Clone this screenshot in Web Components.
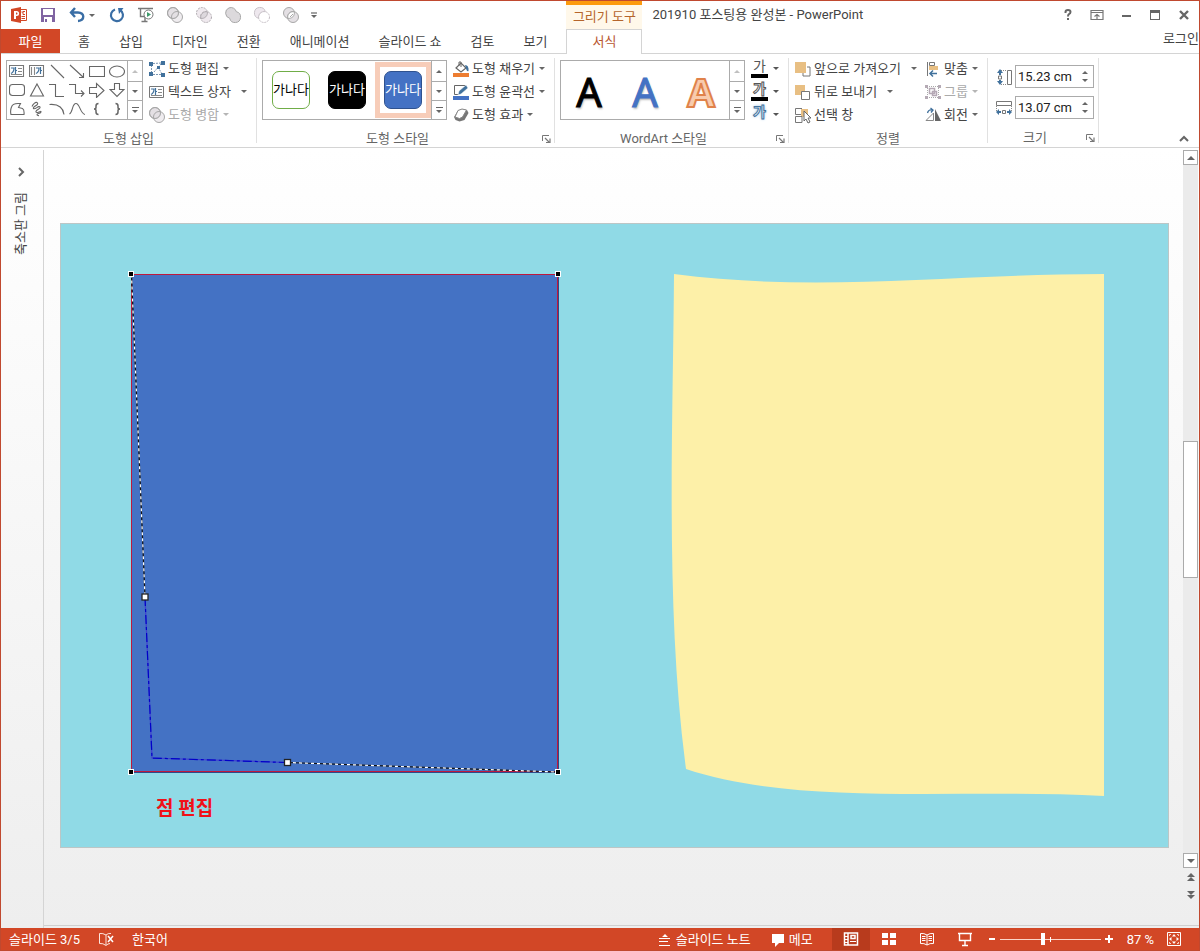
<!DOCTYPE html>
<html lang="ko">
<head>
<meta charset="utf-8">
<title>201910 포스팅용 완성본 - PowerPoint</title>
<style>
	html, body {
		height: 100%;
		margin: 0;
	}
	body {
		font: 13px/16px Roboto, "Noto Sans CJK KR", sans-serif;
		color: #444;
		overflow: hidden;
	}
</style>
</head>
<body>
<ppt-window></ppt-window>

<script>
const BLUE = "#41719c";

const ICONS = {
	// quick access
	powerpoint: `<path d="M0 2 10 0v16L0 14z" fill="#d24726"/><path d="M3 4h2.600a2.300 2.300 0 0 1 0 5H5v3H3zM5 5.500v2h.5a1 1 0 0 0 0-2z" fill="#fff" fill-rule="evenodd"/><path d="M10 2.500h5.500v11H10M10.500 5h1.500v2.500h2M12 4.500h2M10.500 9.500H14M10.500 11.500H14" fill="none" stroke="#d24726"/>`,
	save: `<path d="M1 1h14v14H1z" fill="#8064a2"/><path d="M3 2h10v6H3zM4 10h8v5H4z" fill="#fff"/><path d="M5 12h2v3H5z" fill="#8064a2"/>`,
	undo: `<path d="M6 1 2 5.500 6 10M2 5.500h7c7 0 7 8 0 8.500" fill="none" stroke="#3a6ea5" stroke-width="2.400"/>`,
	redo: `<path d="M6 2.500A6 6 0 1 0 11 3" fill="none" stroke="#3a6ea5" stroke-width="2.200"/><path d="M9 1h5.500L10 7z" fill="#3a6ea5"/>`,
	present: `<path d="M0 1.500h15M2.500 2v7.500H7M7 10v4M3.500 14.500h6" fill="none" stroke="#777" stroke-width="1.400"/><circle cx="10.500" cy="7.500" r="4.500" fill="#fff" stroke="#777"/><path d="M9 5v5l4-2.500z" fill="#3f9b6c"/>`,
	combine: `<g fill="#e4e0e4" stroke="#a8a8a8"><circle cx="6" cy="6" r="5.500"/><circle cx="10" cy="10" r="5.500" fill-opacity=".6"/><circle cx="6" cy="6" r="5.500" fill="none"/></g>`,
	fragment: `<g fill="#efe9ee" stroke="#b0abb0" stroke-dasharray="2 1"><circle cx="6" cy="6" r="5.500"/><circle cx="10" cy="10" r="5.500"/><path d="M4.800 11.300a5.500 5.500 0 0 1 6.500-6.500 5.500 5.500 0 0 1-6.500 6.500z" fill="#ddd8dd" stroke-dasharray="none"/></g>`,
	union: `<path d="M4 .9a5.500 5.500 0 0 1 7.300 3.800 5.500 5.500 0 1 1-6.600 6.600A5.500 5.500 0 0 1 4 .9z" fill="#dcd9dc" stroke="#a8a8a8"/>`,
	subtract: `<circle cx="10" cy="10" r="5.500" fill="#fff" stroke="#c3bcc3" stroke-dasharray="2 1"/><path d="M11.300 4.700a5.500 5.500 0 1 0-6.600 6.600 5.500 5.500 0 0 1 6.600-6.600z" fill="#eee8ee" stroke="#c9c3c9"/>`,
	intersect: `<g fill="#e4e0e4" stroke="#a8a8a8"><circle cx="6" cy="6" r="5.500"/><circle cx="10" cy="10" r="5.500"/><path d="M4.800 11.300a5.500 5.500 0 0 1 6.500-6.500 5.500 5.500 0 0 1-6.500 6.500z" fill="#fff"/><path d="m7 10 3-3"/></g>`,
	customize: `<path d="M5 6h6" stroke="#666" stroke-width="1.200"/><path d="M5 8h6l-3 3z" fill="#666"/>`,

	// window controls
	help: `<path d="M5.500 6V5q0-2 2.500-2t2.500 2q0 1.500-1.500 2.200-1 .6-1 2.300" fill="none" stroke="#666" stroke-width="2"/><path d="M7 11h2v2H7z" fill="#666"/>`,
	ribbonOptions: `<path d="M2 3.500h12v9H2zM2 5.500h12M8 12V8M5.500 9.500 8 7.500l2.500 2" fill="none" stroke="#777" stroke-width="1.200"/>`,
	minimize: `<path d="M4 8h9v2H4z" fill="#666"/>`,
	maximize: `<path d="M3 3h10v10H3zM4 6v6h8V6z" fill="#666" fill-rule="evenodd"/>`,
	close: `<path d="m4 4 8 8M12 4l-8 8" stroke="#666" stroke-width="2.400"/>`,
	chevronUp: `<path d="m4 10 4-4 4 4" fill="none" stroke="#666" stroke-width="2"/>`,
	chevronRight: `<path d="m6 4 4 4-4 4" fill="none" stroke="#666" stroke-width="2"/>`,

	// shape gallery
	textBox: `<path d="M.5 2.500h14v11H.5z" fill="#fff" stroke="#777"/><path d="M2 5h3q0 4-3 5.500M6.500 4v7M6.500 7.500H8" fill="none" stroke="${BLUE}" stroke-width="1.200"/><path d="M9 5.500h4M9 8.500h4M2 11.500h11" stroke="#888"/>`,
	verticalText: `<path d="M.5 2.500h14v11H.5z" fill="#fff" stroke="#777"/><path d="M7 5h3q0 4-3 5.500M11.500 4v7M11.500 7.500H13" fill="none" stroke="${BLUE}" stroke-width="1.200"/><path d="M2.500 4v8M5.500 4v8" stroke="#888"/>`,
	line: `<path d="m2 2 13 13"/>`,
	arrow: `<path d="m1 2 13 12M14.500 10v4.500H10"/>`,
	rect: `<path d="M.5 3.500h15v10H.5z"/>`,
	ellipse: `<ellipse cx="8" cy="8.500" rx="7.500" ry="5.500"/>`,
	roundRect: `<rect x=".5" y="2.500" width="15" height="11" rx="3"/>`,
	triangle: `<path d="M8 2 14.500 14h-13z"/>`,
	elbow: `<path d="M0 2.500h6.500v12H15"/>`,
	elbowArrow: `<path d="M0 2.500h6.500v9H15M12 8.500l3 3-3 3"/>`,
	rightArrow: `<path d="M.5 5.500h7v-4l7.500 7-7.500 7v-4h-7z"/>`,
	downArrow: `<path d="M5.500 1.500h5v6h4.500l-7 7-7-7h4.500z"/>`,
	freeform: `<path d="M2.500 6q1-4 8-3.500h1l-2 4 4 1q2 1 1.500 6h-13q-1-4 .5-7.500z"/>`,
	scribble: `<path d="M3 5.500C4 3 7 0 8.500 2S3 6 4.500 7.500 10 4 11 6s-5 3-4 5 5-2 5 0-4 1-4 2.500 2 1 2 1"/>`,
	arc: `<path d="M.5 3.500q13-1 14.500 10"/>`,
	curve: `<path d="M.5 13C4 11 3 2.500 7 2.500s4 10 9 11"/>`,
	leftBrace: `<path d="M9.500 2.500Q7 2.500 7 5v1.500Q7 8 5 8q2 0 2 1.500V11q0 2.500 2.500 2.500" stroke-width="1.500"/>`,
	rightBrace: `<path d="M6.500 2.500Q9 2.500 9 5v1.500Q9 8 11 8 9 8 9 9.500V11q0 2.500-2.500 2.500" stroke-width="1.500"/>`,

	// ribbon commands
	editShape: `<path d="M2.500 4v9M4 2.500l9-.5M4 13.500h9M5 11l7-8M9 6l4 7" fill="none" stroke="#7b96b2" stroke-dasharray="2 1"/><path d="M0 1h4v4H0zM12 0h4v4h-4zM0 11h4v4H0zM12 12h4v4h-4zM8 5h3v3H8z" fill="${BLUE}"/>`,
	fill: `<path d="m3 7 5-5 5 5-5 4z" fill="#fff" stroke="#666" stroke-width="1.200"/><path d="M6 5V1h2v5" fill="none" stroke="#666"/><path d="M12 4q4 0 3.500 6-1 1-2-1z" fill="${BLUE}"/><path d="M0 12h16v4H0z" fill="#ed7d31"/>`,
	outline: `<path d="M1.500 10.500v-9h11" fill="none" stroke="#666"/><path d="M1.500 10.500h4" stroke="#666"/><path d="m5 11 1-4 7-6 2 3-7 6z" fill="${BLUE}" stroke="#fff" stroke-width=".5"/><path d="M0 12h16v4H0z" fill="#4472c4"/>`,
	effects: `<path d="M5 3.500 9 2l5 1 1.500 3-4 7-5 1.500-4-1.500-1.500-3z" fill="#777"/><path d="M5 3.500 9 2l4.500 1-4 7-3 1.500L2 10z" fill="#fff" stroke="#888"/>`,
	front: `<path d="M8 15h7V6h-3M8 15v-3" fill="none" stroke="#777"/><path d="M0 1h11v11H0z" fill="#e8bf83"/>`,
	back: `<path d="M0 1h10v10H0z" fill="#e8bf83"/><path d="M6.500 7.500h8v8h-8z" fill="#fff" stroke="#777"/>`,
	selectPane: `<path d="M6 2h7v8H6z" fill="#e8bf83"/><path d="M7 1.500H.5v6H6M7 9.500H.5v6H7v-6" fill="none" stroke="#777"/><path d="M9 4v10l2-2 2 4 2-1-2-4h3z" fill="#fff" stroke="#666"/>`,
	align: `<path d="M2.500 1v14" stroke="#777"/><path d="M4.500 1.500h5v3h-5z" fill="none" stroke="#777"/><path d="M4 5h9v4H4z" fill="#e8bf83"/><path d="M12 12.500H5M8 9.500l-3 3 3 3" fill="none" stroke="${BLUE}" stroke-width="1.500"/>`,
	group: `<path d="M2 2.500h12M2 13.500h12M2.500 2v12M13.500 2v12" stroke="#aaa" stroke-dasharray="1 1"/><path d="M4.500 4.500h5v5h-5zM7.500 7.500h4v4h-4z" fill="none" stroke="#b5a8b5" stroke-width="1.500"/><path d="M0 1h3v3H0zM13 1h3v3h-3zM0 12h3v3H0zM13 12h3v3h-3z" fill="#b5aab5"/>`,
	rotate: `<path d="M10 2l6 12h-6z" fill="#666"/><path d="M8.500 6v7.500H1z" fill="#fff" stroke="#888"/><path d="M2.500 6q1-4 5-3M5.500 1l2.500 2-2 2.500" fill="none" stroke="${BLUE}" stroke-width="1.300"/>`,
	height: `<path d="M11.500 1.500h4v14h-4z" fill="none" stroke="#777"/><path d="M5 1.500h6M5 15.500h6" stroke="#888" stroke-dasharray="1 1"/><path d="M2.500 7h3v3h-3z" fill="none" stroke="#777"/><path d="M4 0 7 4H5v2H3V4H1zM4 16l3-4H5v-1H3v1H1z" fill="${BLUE}"/>`,
	width: `<path d="M.5 1.500h15v4H.5z" fill="none" stroke="#777"/><path d="M.5 6v6M15.500 6v6" stroke="#888" stroke-dasharray="1 1"/><path d="M6.500 10.500h3v3h-3z" fill="none" stroke="#777"/><path d="m0 12 3-3v2h2v2H3v2zM16 12l-3-3v2h-2v2h2v2z" fill="${BLUE}"/>`,
	launcher: `<path d="M4.500 10V4.500H11" fill="none" stroke="#777"/><path d="m7 7 4 4M12 7.500v4H8" fill="none" stroke="#777" stroke-width="1.200"/>`,

	// status bar
	proofing: `<path d="M8 4Q5 2 1.500 2.500v10Q5 12 8 14.500q2-2 4-2M8 4v10M8 4q2-2 5-1.500" fill="none" stroke="#fce4dc"/><path d="m10 5 5 6M15 5l-5 6" stroke="#fff" stroke-width="1.500"/>`,
	notes: `<path d="m5 5 3-3 3 3zM2 6h11v1H2zM2 9h9v1H2zM2 13h11v1H2z" fill="#fff"/>`,
	comment: `<path d="M2 2h12v9h-5l-4 4v-4H2z" fill="#fff"/>`,
	normalView: `<path d="M1.500 2v12h13V2zM5 2v12" fill="none" stroke="#fff" stroke-width="1.500"/><path d="M2 5.500h3M2 8.500h3M2 11.500h3M7 10.500h6" stroke="#fff"/><path d="M8 4.500h4v3H8z" fill="none" stroke="#fff" stroke-width="1.500"/>`,
	sorter: `<path d="M1 2h6v5H1zM9 2h6v5H9zM1 9h6v5H1zM9 9h6v5H9z" fill="#fff"/>`,
	reading: `<path d="M8 4Q5 2 1.500 2.500v10Q5 12 8 14q3-2 6.500-1.500v-10Q11 2 8 4v10M3 5.500h3.500M3 7.500h3.500M3 9.500h3.500M9.500 5.500H13M9.500 7.500H13M9.500 9.500H13" fill="none" stroke="#fff"/>`,
	slideShow: `<path d="M1 2.500h14M2.500 3v6.500h11V3M8 10v4M5 14.500h6" fill="none" stroke="#fff" stroke-width="1.400"/>`,
	minus: `<path d="M5 7h6v2H5z" fill="#fff"/>`,
	plus: `<path d="M4 7h8v2H4zM7 4h2v8H7z" fill="#fff"/>`,
	fit: `<path d="M1.500 1.500h13v13h-13z" fill="none" stroke="#fff"/><path d="M6 5.500h4L8 3zM6 10.500h4L8 13zM5.500 6v4L3 8zM10.500 6v4L13 8z" fill="#fff"/><path d="M3.500 5V3.500H5M11 3.500h1.500V5M3.500 11v1.500H5M11 12.500h1.500V11" fill="none" stroke="#fbd5c9"/>`,

	// scrolling
	up: `<path d="m4 10 4-4 4 4z" fill="#666"/>`,
	down: `<path d="m4 6 4 4 4-4z" fill="#666"/>`,
	pageUp: `<path d="m4 8 4-4 4 4zM4 12l4-4 4 4z" fill="#666"/>`,
	pageDown: `<path d="m4 4 4 4 4-4zM4 8l4 4 4-4z" fill="#666"/>`
};

const RESET = `
	*, :host { box-sizing: border-box; }
	button, input {
		margin: 0;
		padding: 0;
		border: 0;
		background: none;
		color: inherit;
		font: inherit;
	}
`;

class BaseElement extends HTMLElement {

	constructor() {
		super();
		this.root = this.attachShadow({ mode: "open" });
	}

	connectedCallback() {
		this.root.innerHTML = `<style>${RESET}</style>${this.render()}`;
	}

	attr(name) {
		return this.getAttribute(name) || "";
	}

}

class OfficeIcon extends BaseElement {

	render() {
		return `
			<style>
				:host { display: block; flex: none; width: 16px; height: 16px; }
				svg { display: block; width: 100%; height: 100%; overflow: visible; }
			</style>
			<svg viewBox="0 0 16 16" fill="none" stroke="none" aria-hidden="true">${ICONS[this.attr("name")]}</svg>
		`;
	}

}

class IconButton extends BaseElement {

	render() {
		return `
			<style>
				:host { display: flex; flex: none; }
				button { display: flex; align-items: center; justify-content: center; width: 100%; height: 100%; }
			</style>
			<button type="button" aria-label="${this.attr("label")}"><office-icon name="${this.attr("icon")}"></office-icon></button>
		`;
	}

}

class DropCaret extends BaseElement {

	render() {
		return `
			<style>
				:host {
					display: block;
					flex: none;
					border: 3px solid transparent;
					border-top-color: currentColor;
					border-bottom: 0;
				}
			</style>
		`;
	}

}

class QuickAccess extends BaseElement {

	render() {
		const merge = ["combine", "fragment", "union", "subtract", "intersect"];
		return `
			<style>
				:host { display: flex; align-items: center; gap: 13px; padding-left: 10px; color: #666; }
				.undo { display: flex; align-items: center; gap: 4px; margin-right: 1px; }
				.customize { margin-left: -6px; }
			</style>
			<office-icon name="powerpoint"></office-icon>
			<icon-button icon="save" label="저장"></icon-button>
			<div class="undo"><icon-button icon="undo" label="실행 취소"></icon-button><drop-caret></drop-caret></div>
			<icon-button icon="redo" label="다시 실행"></icon-button>
			<icon-button icon="present" label="처음부터 시작"></icon-button>
			${merge.map(name => `<icon-button icon="${name}" label="도형 병합"></icon-button>`).join("")}
			<icon-button class="customize" icon="customize" label="빠른 실행 도구 모음 사용자 지정"></icon-button>
		`;
	}

}

class TabStrip extends BaseElement {

	render() {
		const tabs = ["홈", "삽입", "디자인", "전환", "애니메이션", "슬라이드 쇼", "검토", "보기"];
		return `
			<style>
				:host { display: flex; border-bottom: 1px solid #d4d4d4; }
				button { padding-top: 2px; }
				.file { width: 59px; background: #d24726; color: #fff; }
				.tabs { display: flex; gap: 29px; padding: 0 19px 0 18px; }
				.tabs button { white-space: nowrap; }
			</style>
			<button class="file" type="button">파일</button>
			<div class="tabs">${tabs.map(tab => `<button type="button">${tab}</button>`).join("")}</div>
		`;
	}

}

class WindowControls extends BaseElement {

	render() {
		return `
			<style>
				:host { display: flex; align-items: center; gap: 13px; padding-right: 7px; }
			</style>
			<icon-button icon="help" label="도움말"></icon-button>
			<icon-button icon="ribbonOptions" label="리본 메뉴 표시 옵션"></icon-button>
			<icon-button icon="minimize" label="최소화"></icon-button>
			<icon-button icon="maximize" label="최대화"></icon-button>
			<icon-button icon="close" label="닫기"></icon-button>
		`;
	}

}

class WindowHeader extends BaseElement {

	render() {
		return `
			<style>
				:host {
					display: grid;
					grid-template: 28px 25px / auto 76px 1fr;
					background: #fff;
				}
				.context {
					border-top: 4px solid #fc9a0e;
					background: #fff8ea;
					color: #b5652b;
					text-align: center;
					line-height: 24px;
				}
				.title { display: flex; align-items: center; justify-content: space-between; padding-left: 10px; }
				.format { border: 1px solid #d4d4d4; border-bottom: 0; color: #b8562e; }
				.account { display: flex; justify-content: flex-end; border-bottom: 1px solid #d4d4d4; }
				.account button { height: 20px; }
			</style>
			<quick-access></quick-access>
			<div class="context">그리기 도구</div>
			<div class="title"><span>201910 포스팅용 완성본 - PowerPoint</span><window-controls></window-controls></div>
			<tab-strip></tab-strip>
			<button class="format" type="button">서식</button>
			<div class="account"><button type="button">로그인</button></div>
		`;
	}

}

class RibbonGroup extends BaseElement {

	render() {
		return `
			<style>
				:host { display: flex; flex-direction: column; padding-top: 3px; position: relative; }
				.content { display: flex; height: 69px; padding: 0 10px 0 5px; }
				.footer { display: flex; align-items: center; height: 18px; padding-right: 1px; margin-top: 4px; color: #666; }
				.footer span { flex: 1; text-align: center; white-space: nowrap; }
				/* separator stops short of the ribbon's lower edge */
				:host::after {
					content: "";
					position: absolute;
					top: 4px;
					right: 0;
					bottom: 4px;
					border-right: 1px solid #e1e1e1;
				}
			</style>
			<div class="content"><slot></slot></div>
			<div class="footer">
				<span>${this.attr("label")}</span>
				${this.hasAttribute("launcher") ? `<icon-button icon="launcher" label="${this.attr("label")} 대화 상자"></icon-button>` : ""}
			</div>
		`;
	}

}

class RibbonColumn extends BaseElement {

	render() {
		return `
			<style>
				:host { display: flex; flex-direction: column; align-items: flex-start; padding-left: 6px; }
			</style>
			<slot></slot>
		`;
	}

}

class RibbonButton extends BaseElement {

	render() {
		const caret = this.attr("caret");
		return `
			<style>
				:host { display: block; height: 23px; }
				button { display: flex; align-items: center; gap: 3px; height: 100%; white-space: nowrap; }
				drop-caret { color: #666; margin-left: ${caret === "split" ? 7 : 1}px; }
				button:disabled { color: #aaa; }
				button:disabled drop-caret { color: #b5b5b5; }
			</style>
			<button type="button" ${this.hasAttribute("disabled") ? "disabled" : ""}>
				<office-icon name="${this.attr("icon")}"></office-icon>
				<slot></slot>
				${caret ? "<drop-caret></drop-caret>" : ""}
			</button>
		`;
	}

}

class RibbonGallery extends BaseElement {

	render() {
		return `
			<style>
				:host { display: flex; height: 60px; margin-top: 3px; border: 1px solid #ababab; background: #fff; }
				.items { display: flex; }
				.scroll { display: grid; grid-template-rows: 20px 19px 19px; width: 15px; border-left: 1px solid #ababab; }
				.scroll button { display: flex; align-items: center; justify-content: center; color: #666; }
				.scroll button + button { border-top: 1px solid #ababab; }
				.scroll button:disabled { color: #c0c0c0; }
				.up { transform: rotate(180deg); }
				.more { flex-direction: column; gap: 2px; }
				.more::before { content: ""; width: 7px; border-top: 1px solid #666; }
			</style>
			<div class="items"><slot></slot></div>
			<div class="scroll">
				<button type="button" aria-label="위로" ${this.hasAttribute("at-top") ? "disabled" : ""}><drop-caret class="up"></drop-caret></button>
				<button type="button" aria-label="아래로"><drop-caret></drop-caret></button>
				<button type="button" aria-label="자세히" class="more"><drop-caret></drop-caret></button>
			</div>
		`;
	}

}

class ShapeGrid extends BaseElement {

	render() {
		const shapes = [
			"textBox", "verticalText", "line", "arrow", "rect", "ellipse",
			"roundRect", "triangle", "elbow", "elbowArrow", "rightArrow", "downArrow",
			"freeform", "scribble", "arc", "curve", "leftBrace", "rightBrace"
		];
		return `
			<style>
				:host { display: grid; grid-template-columns: repeat(6, 20px); grid-auto-rows: 19px; }
				button { display: flex; align-items: center; justify-content: center; }
				svg { width: 16px; height: 16px; fill: none; stroke: #666; stroke-width: 1.1; }
			</style>
			${shapes.map(name => `<button type="button" aria-label="${name}"><svg viewBox="0 0 16 16">${ICONS[name]}</svg></button>`).join("")}
		`;
	}

}

class StyleSwatch extends BaseElement {

	render() {
		return `
			<style>
				:host { display: block; width: 56px; height: 56px; margin-top: 1px; border: 5px solid transparent; }
				:host([selected]) { border-color: #f7cdb9; }
				button {
					display: block;
					width: 38px;
					height: 38px;
					margin: 4px;
					border: 1px solid var(--line);
					border-radius: 7px;
					background: var(--fill);
					color: var(--ink);
					white-space: nowrap;
				}
				span { display: flex; justify-content: center; }
			</style>
			<button type="button"><span>가나다</span></button>
		`;
	}

}

class WordArtSample extends BaseElement {

	render() {
		return `
			<style>
				:host { display: block; width: 56px; height: 58px; }
				button {
					width: 100%;
					height: 100%;
					padding-top: 4px;
					font: 40px/48px "Noto Sans", sans-serif;
					color: var(--ink);
					-webkit-text-stroke: 1px var(--ink);
					text-shadow: 1px 2px 2px #bbb;
				}
				:host([bold]) button {
					font-weight: 700;
					-webkit-text-stroke: 2px #e0824a;
					text-shadow: 0 0 2px #f8cbad;
				}
			</style>
			<button type="button">A</button>
		`;
	}

}

class TextTool extends BaseElement {

	render() {
		return `
			<style>
				:host { display: block; height: 23px; }
				button { display: flex; align-items: center; gap: 5px; height: 100%; color: #555; }
				.glyph { width: 17px; height: 18px; line-height: 13px; text-align: center; font-size: 14px; }
				:host([bar]) .glyph { border-bottom: 4px solid #000; }
				:host([kind="outline"]) .glyph { color: #fff; -webkit-text-stroke: 1px #555; font-weight: 700; }
				:host([kind="glow"]) .glyph { color: #fff; -webkit-text-stroke: 1px ${BLUE}; font-weight: 700; text-shadow: 0 0 3px #5b9bd5; }
			</style>
			<button type="button" aria-label="${this.attr("label")}"><span class="glyph">가</span><drop-caret></drop-caret></button>
		`;
	}

}

class SpinField extends BaseElement {

	render() {
		return `
			<style>
				:host { display: block; }
				label { display: flex; align-items: center; gap: 3px; }
				.box { display: flex; height: 23px; width: 79px; border: 1px solid #ababab; color: #222; }
				input { flex: 1; min-width: 0; padding-left: 2px; outline: 0; }
				.spin { display: flex; flex-direction: column; align-items: center; justify-content: space-evenly; width: 16px; color: #666; }
				.spin button { display: flex; }
				.up { transform: rotate(180deg); }
			</style>
			<label>
				<office-icon name="${this.attr("icon")}"></office-icon>
				<span class="box">
					<input type="text" aria-label="${this.attr("label")}" value="${this.attr("value")}">
					<span class="spin">
						<button type="button" aria-label="늘리기"><drop-caret class="up"></drop-caret></button>
						<button type="button" aria-label="줄이기"><drop-caret></drop-caret></button>
					</span>
				</span>
			</label>
		`;
	}

}

class RibbonBar extends BaseElement {

	render() {
		return `
			<style>
				:host { display: flex; height: 94px; background: #fff; border-bottom: 1px solid #d4d4d4; }
				.order { padding-left: 1px; }
				.arrange { padding-left: 8px; }
				.size { display: flex; flex-direction: column; gap: 8px; padding: 8px 0 0 3px; margin-right: -5px; }
				.collapse { align-self: flex-end; margin-left: auto; margin-right: 7px; }
			</style>
			<ribbon-group label="도형 삽입">
				<ribbon-gallery at-top><shape-grid></shape-grid></ribbon-gallery>
				<ribbon-column>
					<ribbon-button icon="editShape" caret="menu">도형 편집</ribbon-button>
					<ribbon-button icon="textBox" caret="split">텍스트 상자</ribbon-button>
					<ribbon-button icon="combine" caret="menu" disabled>도형 병합</ribbon-button>
				</ribbon-column>
			</ribbon-group>
			<ribbon-group label="도형 스타일" launcher>
				<ribbon-gallery>
					<style-swatch style="--fill:#fff; --line:#70ad47; --ink:#000"></style-swatch>
					<style-swatch style="--fill:#000; --line:#000; --ink:#fff"></style-swatch>
					<style-swatch selected style="--fill:#4472c4; --line:#2f528f; --ink:#fff"></style-swatch>
				</ribbon-gallery>
				<ribbon-column>
					<ribbon-button icon="fill" caret="menu">도형 채우기</ribbon-button>
					<ribbon-button icon="outline" caret="menu">도형 윤곽선</ribbon-button>
					<ribbon-button icon="effects" caret="menu">도형 효과</ribbon-button>
				</ribbon-column>
			</ribbon-group>
			<ribbon-group label="WordArt 스타일" launcher>
				<ribbon-gallery at-top>
					<word-art-sample style="--ink:#000"></word-art-sample>
					<word-art-sample style="--ink:#4472c4"></word-art-sample>
					<word-art-sample bold style="--ink:#f8cbad"></word-art-sample>
				</ribbon-gallery>
				<ribbon-column>
					<text-tool bar label="텍스트 채우기"></text-tool>
					<text-tool bar kind="outline" label="텍스트 윤곽선"></text-tool>
					<text-tool kind="glow" label="텍스트 효과"></text-tool>
				</ribbon-column>
			</ribbon-group>
			<ribbon-group label="정렬">
				<ribbon-column class="order">
					<ribbon-button icon="front" caret="split">앞으로 가져오기</ribbon-button>
					<ribbon-button icon="back" caret="split">뒤로 보내기</ribbon-button>
					<ribbon-button icon="selectPane">선택 창</ribbon-button>
				</ribbon-column>
				<ribbon-column class="arrange">
					<ribbon-button icon="align" caret="menu">맞춤</ribbon-button>
					<ribbon-button icon="group" caret="menu" disabled>그룹</ribbon-button>
					<ribbon-button icon="rotate" caret="menu">회전</ribbon-button>
				</ribbon-column>
			</ribbon-group>
			<ribbon-group label="크기" launcher>
				<div class="size">
					<spin-field icon="height" label="높이" value="15.23 cm"></spin-field>
					<spin-field icon="width" label="너비" value="13.07 cm"></spin-field>
				</div>
			</ribbon-group>
			<icon-button class="collapse" icon="chevronUp" label="리본 메뉴 축소"></icon-button>
		`;
	}

}

class ThumbnailPane extends BaseElement {

	render() {
		return `
			<style>
				:host {
					display: flex;
					flex-direction: column;
					align-items: center;
					gap: 12px;
					width: 43px;
					padding: 14px 3px 0 0;
					border-right: 1px solid #d4d4d4;
				}
				span { writing-mode: vertical-rl; text-orientation: sideways; transform: rotate(180deg); }
			</style>
			<icon-button icon="chevronRight" label="축소판 펼치기"></icon-button>
			<span>축소판 그림</span>
		`;
	}

}

class SlideCanvas extends BaseElement {

	render() {
		const handle = (x, y) => `<rect x="${x - 2.5}" y="${y - 2.5}" width="5" height="5" fill="#000" stroke="#fff"/>`;
		const knob = (x, y) => `<rect x="${x - 3}" y="${y - 3}" width="6" height="6" fill="#fff" stroke="#222" stroke-width="1.300"/>`;
		return `
			<style>
				:host { display: block; }
				svg { display: block; width: 100%; border: 1px solid #bcc6c6; background: #90dae6; }
				text { font-size: 19px; font-weight: 700; fill: #f01018; }
			</style>
			<svg viewBox="61 224 1107 623">
				<path d="M131 274h428v499H131z" fill="#2f4a8c"/>
				<path d="M131 274h427v498H131z" fill="#c0183c"/>
				<path d="M132 275h425v496H132z" fill="#4472c4"/>
				<g fill="none" stroke-width="1.200">
					<path d="M131.500 274.500 145 597M287 762.500 558 772" stroke="#111"/>
					<path d="M131.500 274.500 145 597M287 762.500 558 772" stroke="#fff" stroke-dasharray="3 3"/>
					<path d="M145 597 152 758 287 762.500" stroke="#4040d0"/>
					<path d="M145 597 152 758 287 762.500" stroke="#0000c8" stroke-dasharray="9 3 3 3"/>
				</g>
				${handle(131, 274)}${handle(558, 274)}${handle(131, 772)}${handle(558, 772)}
				${knob(145, 597)}${knob(287.5, 762.5)}
				<path d="M674 274C820 293 950 274 1104 274V796C960 788 800 807 686 769C665 610 673 430 674 274z" fill="#fdf0a8"/>
				<text x="156" y="815">점 편집</text>
			</svg>
		`;
	}

}

class VerticalScroll extends BaseElement {

	render() {
		return `
			<style>
				:host { display: flex; flex-direction: column; width: 16px; padding: 0 1px 21px 0; }
				.end { height: 15px; border: 1px solid #ababab; background: #fff; }
				.track { flex: 1; display: grid; grid-template-rows: 276fr 138fr 275fr; background: #ebebeb; }
				.thumb { grid-row: 2; border: 1px solid #ababab; background: #fff; }
				.page { height: 18px; }
			</style>
			<icon-button class="end" icon="up" label="위로"></icon-button>
			<div class="track"><div class="thumb"></div></div>
			<icon-button class="end" icon="down" label="아래로"></icon-button>
			<icon-button class="page" icon="pageUp" label="이전 슬라이드"></icon-button>
			<icon-button class="page" icon="pageDown" label="다음 슬라이드"></icon-button>
		`;
	}

}

class WorkArea extends BaseElement {

	render() {
		return `
			<style>
				:host {
					display: flex;
					flex: 1;
					min-height: 0;
					padding-top: 2px;
					background: linear-gradient(#fff, #eee);
				}
				main { flex: 1; min-width: 0; display: flex; align-items: center; padding: 0 14px 4px 16px; border-bottom: 1px solid #d0d0d0; }
				slide-canvas { flex: 1; min-width: 0; }
				.edge { display: flex; flex: 1; min-width: 0; margin-bottom: 2px; }
				vertical-scroll { border-bottom: 1px solid #d0d0d0; }
			</style>
			<thumbnail-pane></thumbnail-pane>
			<div class="edge">
				<main><slide-canvas></slide-canvas></main>
				<vertical-scroll></vertical-scroll>
			</div>
		`;
	}

}

class ZoomSlider extends BaseElement {

	render() {
		return `
			<style>
				:host { display: flex; align-items: center; }
				input {
					appearance: none;
					-webkit-appearance: none;
					width: 101px;
					height: 12px;
					background:
						linear-gradient(#fff, #fff) 50% 50% / 1px 5px no-repeat,
						linear-gradient(#fbd5c9, #fbd5c9) 0 50% / 100% 1px no-repeat;
				}
				input::-webkit-slider-thumb {
					-webkit-appearance: none;
					width: 4px;
					height: 12px;
					background: #fff;
				}
			</style>
			<icon-button icon="minus" label="축소"></icon-button>
			<input type="range" min="0" max="100" value="43" aria-label="확대/축소">
			<icon-button icon="plus" label="확대"></icon-button>
		`;
	}

}

class StatusBar extends BaseElement {

	render() {
		return `
			<style>
				:host { display: flex; align-items: center; height: 22px; padding: 0 17px 0 8px; background: #d24726; color: #fff; white-space: nowrap; }
				.start, .end, .views { display: flex; align-items: center; height: 100%; }
				.start { gap: 18px; flex: 1; }
				button { display: flex; align-items: center; gap: 3px; padding-top: 1px; }
				.end button { margin-right: 19px; }
				.views icon-button { width: 38px; height: 22px; }
				.views .active { background: #b83b1d; }
				.end .percent { margin: 0 12px 0 10px; }
			</style>
			<div class="start">
				<button type="button">슬라이드 3/5</button>
				<icon-button icon="proofing" label="맞춤법 검사"></icon-button>
				<button type="button">한국어</button>
			</div>
			<div class="end">
				<button type="button"><office-icon name="notes"></office-icon>슬라이드 노트</button>
				<button type="button"><office-icon name="comment"></office-icon>메모</button>
				<div class="views">
					<icon-button class="active" icon="normalView" label="기본"></icon-button>
					<icon-button icon="sorter" label="여러 슬라이드"></icon-button>
					<icon-button icon="reading" label="읽기용 보기"></icon-button>
					<icon-button icon="slideShow" label="슬라이드 쇼"></icon-button>
				</div>
				<zoom-slider></zoom-slider>
				<button class="percent" type="button">87 %</button>
				<icon-button icon="fit" label="현재 창 크기에 맞춤"></icon-button>
			</div>
		`;
	}

}

class PptWindow extends BaseElement {

	render() {
		return `
			<style>
				:host { display: flex; flex-direction: column; height: 100vh; border: 1px solid #c0492f; }
			</style>
			<window-header></window-header>
			<ribbon-bar></ribbon-bar>
			<work-area></work-area>
			<status-bar></status-bar>
		`;
	}

}

window.customElements.define("office-icon", OfficeIcon);
window.customElements.define("icon-button", IconButton);
window.customElements.define("drop-caret", DropCaret);
window.customElements.define("quick-access", QuickAccess);
window.customElements.define("tab-strip", TabStrip);
window.customElements.define("window-controls", WindowControls);
window.customElements.define("window-header", WindowHeader);
window.customElements.define("ribbon-group", RibbonGroup);
window.customElements.define("ribbon-column", RibbonColumn);
window.customElements.define("ribbon-button", RibbonButton);
window.customElements.define("ribbon-gallery", RibbonGallery);
window.customElements.define("shape-grid", ShapeGrid);
window.customElements.define("style-swatch", StyleSwatch);
window.customElements.define("word-art-sample", WordArtSample);
window.customElements.define("text-tool", TextTool);
window.customElements.define("spin-field", SpinField);
window.customElements.define("ribbon-bar", RibbonBar);
window.customElements.define("thumbnail-pane", ThumbnailPane);
window.customElements.define("slide-canvas", SlideCanvas);
window.customElements.define("vertical-scroll", VerticalScroll);
window.customElements.define("work-area", WorkArea);
window.customElements.define("zoom-slider", ZoomSlider);
window.customElements.define("status-bar", StatusBar);
window.customElements.define("ppt-window", PptWindow);
</script>
</body>
</html>
